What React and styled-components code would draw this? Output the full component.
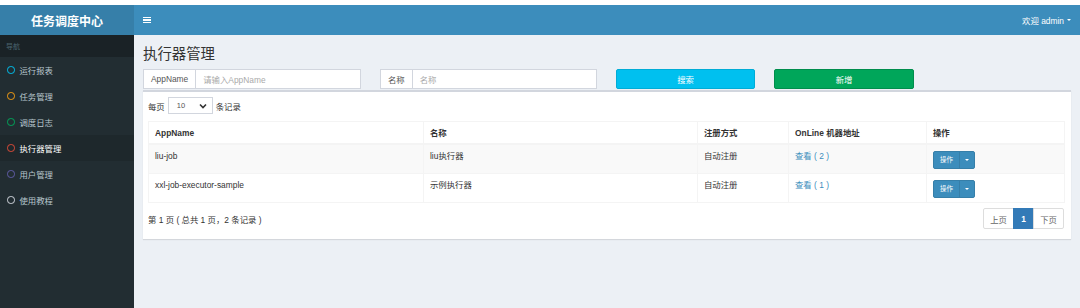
import React from 'react';
import styled, { createGlobalStyle } from 'styled-components';

const GlobalStyle = createGlobalStyle`
  html, body {
    margin: 0;
    padding: 0;
    background: #fff;
  }
  body {
    font-family: "Liberation Sans", "Noto Sans CJK SC", sans-serif;
    font-size: 8.4px;
    color: #333;
  }
  * {
    box-sizing: border-box;
  }
`;

const Page = styled.div`
  width: 1080px;
  height: 308px;
  padding-top: 5px;
  display: flex;
  flex-direction: column;
  background: #fff;
  overflow: hidden;
`;

const Header = styled.header`
  display: flex;
  height: 30px;
  flex-shrink: 0;
`;

const Logo = styled.div`
  width: 134px;
  background: #367fa9;
  color: #fff;
  font-size: 12px;
  font-weight: bold;
  display: flex;
  align-items: center;
  justify-content: center;
`;

const Navbar = styled.div`
  flex: 1;
  background: #3c8dbc;
  display: flex;
  align-items: center;
  justify-content: space-between;
  padding: 0 9px;
  color: #fff;
`;

const Toggle = styled.div`
  width: 8px;
  display: flex;
  flex-direction: column;
  gap: 1px;

  span {
    height: 1.5px;
    background: #fff;
  }
`;

const UserMenu = styled.div`
  display: flex;
  align-items: center;
  gap: 3px;
  font-size: 8.4px;
`;

const Caret = styled.span`
  width: 0;
  height: 0;
  border-left: 2.5px solid transparent;
  border-right: 2.5px solid transparent;
  border-top: 2.5px solid ${p => p.color || '#fff'};
  display: inline-block;
`;

const Main = styled.div`
  flex: 1;
  display: flex;
  min-height: 0;
`;

const Sidebar = styled.aside`
  width: 134px;
  background: #222d32;
  flex-shrink: 0;
`;

const NavHeader = styled.div`
  height: 22px;
  background: #1a2226;
  color: #4b646f;
  font-size: 7px;
  display: flex;
  align-items: center;
  padding-left: 6px;
`;

const NavItem = styled.div`
  height: 26px;
  display: flex;
  align-items: center;
  padding-left: 7px;
  gap: 5px;
  color: ${p => (p.active ? '#fff' : '#b8c7ce')};
  background: ${p => (p.active ? '#1e282c' : 'transparent')};
  font-size: 8.4px;
`;

const Ring = styled.span`
  width: 7.5px;
  height: 7.5px;
  border-radius: 50%;
  border: 1.6px solid ${p => p.color};
`;

const Content = styled.main`
  flex: 1;
  background: #ecf0f5;
  padding: 0 9px 0 9px;
`;

const Title = styled.h1`
  margin: 0;
  font-size: 14.4px;
  font-weight: normal;
  color: #333;
  height: 34px;
  display: flex;
  align-items: center;
`;

const FilterRow = styled.div`
  display: grid;
  grid-template-columns: 218px 217px 139px 140px;
  column-gap: 19px;
  height: 20px;
`;

const InputGroup = styled.div`
  display: flex;
  background: #fff;
  border: 1px solid #d2d6de;
  height: 20px;
`;

const Addon = styled.span`
  padding: 0 7px;
  display: flex;
  align-items: center;
  border-right: 1px solid #d2d6de;
  color: #555;
`;

const Field = styled.span`
  flex: 1;
  padding-left: 7px;
  display: flex;
  align-items: center;
  color: #aaa;
`;

const Button = styled.div`
  height: 20px;
  border-radius: 2px;
  border: 1px solid ${p => p.border};
  background: ${p => p.bg};
  color: #fff;
  display: flex;
  align-items: center;
  justify-content: center;
`;

const Box = styled.section`
  background: #fff;
  border-top: 2px solid #d2d6de;
  box-shadow: 0 1px 1px rgba(0, 0, 0, 0.1);
  padding: 5px 6px 10px 5px;
  margin-top: 1px;
`;

const PerPage = styled.div`
  display: flex;
  align-items: center;
  gap: 3px;
  height: 17px;
  margin-bottom: 7px;
`;

const Select = styled.div`
  width: 45px;
  height: 17px;
  border: 1px solid #d2d6de;
  display: flex;
  align-items: center;
  justify-content: space-between;
  padding: 0 5px 0 8px;
  font-size: 7.5px;
  color: #555;
`;

const Table = styled.table`
  width: 916px;
  table-layout: fixed;
  border-collapse: collapse;
  border: 1px solid #f4f4f4;
`;

const Th = styled.th`
  text-align: left;
  font-weight: bold;
  padding: 5px 6px 4px;
  line-height: 12px;
  border: 1px solid #f4f4f4;
  border-bottom-width: 2px;
`;

const Tr = styled.tr`
  background: ${p => (p.striped ? '#f9f9f9' : '#fff')};
`;

const Td = styled.td`
  padding: 5px 6px 4px;
  line-height: 12px;
  vertical-align: top;
  border: 1px solid #f4f4f4;
  height: 28px;
`;

const Link = styled.span`
  color: #3c8dbc;
`;

const SplitButton = styled.div`
  display: inline-flex;
  height: 18px;
  margin-top: 1px;
  border-radius: 2px;
  background: #3c8dbc;
  border: 1px solid #367fa9;
  color: #fff;
  font-size: 6.5px;
  overflow: hidden;
  vertical-align: top;
`;

const SplitMain = styled.span`
  width: 26px;
  display: flex;
  align-items: center;
  justify-content: center;
  border-right: 1px solid #367fa9;
`;

const SplitToggle = styled.span`
  width: 14px;
  display: flex;
  align-items: center;
  justify-content: center;
`;

const Footer = styled.div`
  display: flex;
  justify-content: space-between;
  align-items: center;
  margin-top: 5px;
  width: 916px;
`;

const Pager = styled.div`
  display: flex;
  height: 21px;
`;

const PageLink = styled.span`
  padding: 0 6px;
  min-width: ${p => (p.narrow ? '21px' : '31px')};
  display: flex;
  align-items: center;
  justify-content: center;
  border: 1px solid ${p => (p.active ? '#337ab7' : '#ddd')};
  margin-left: -1px;
  background: ${p => (p.active ? '#337ab7' : '#fff')};
  color: ${p => (p.active ? '#fff' : '#666')};
  font-weight: ${p => (p.active ? 'bold' : 'normal')};
  border-radius: ${p => p.radius || '0'};
`;

const menu = [
  { label: '运行报表', color: '#00c0ef' },
  { label: '任务管理', color: '#f39c12' },
  { label: '调度日志', color: '#00a65a' },
  { label: '执行器管理', color: '#dd4b39', active: true },
  { label: '用户管理', color: '#605ca8' },
  { label: '使用教程', color: '#d2d6de' },
];

const rows = [
  { app: 'liu-job', name: 'liu执行器', type: '自动注册', count: 2 },
  { app: 'xxl-job-executor-sample', name: '示例执行器', type: '自动注册', count: 1 },
];

export default function App() {
  return (
    <>
      <GlobalStyle />
      <Page>
        <Header>
          <Logo>任务调度中心</Logo>
          <Navbar>
            <Toggle>
              <span />
              <span />
              <span />
            </Toggle>
            <UserMenu>
              欢迎 admin <Caret />
            </UserMenu>
          </Navbar>
        </Header>
        <Main>
          <Sidebar>
            <NavHeader>导航</NavHeader>
            {menu.map(m => (
              <NavItem key={m.label} active={m.active}>
                <Ring color={m.color} />
                {m.label}
              </NavItem>
            ))}
          </Sidebar>
          <Content>
            <Title>执行器管理</Title>
            <FilterRow>
              <InputGroup>
                <Addon>AppName</Addon>
                <Field>请输入AppName</Field>
              </InputGroup>
              <InputGroup>
                <Addon>名称</Addon>
                <Field>名称</Field>
              </InputGroup>
              <Button bg="#00c0ef" border="#00acd6">搜索</Button>
              <Button bg="#00a65a" border="#008d4c">新增</Button>
            </FilterRow>
            <Box>
              <PerPage>
                每页
                <Select>
                  10
                  <svg width="8" height="6" viewBox="0 0 8 6">
                    <path d="M1 1.5 L4 4.5 L7 1.5" stroke="#333" strokeWidth="1.6" fill="none" />
                  </svg>
                </Select>
                条记录
              </PerPage>
              <Table>
                <colgroup>
                  <col style={{ width: 275 }} />
                  <col style={{ width: 274 }} />
                  <col style={{ width: 91 }} />
                  <col style={{ width: 138 }} />
                  <col style={{ width: 138 }} />
                </colgroup>
                <thead>
                  <tr>
                    <Th>AppName</Th>
                    <Th>名称</Th>
                    <Th>注册方式</Th>
                    <Th>OnLine 机器地址</Th>
                    <Th>操作</Th>
                  </tr>
                </thead>
                <tbody>
                  {rows.map((r, i) => (
                    <Tr key={r.app} striped={i % 2 === 0}>
                      <Td>{r.app}</Td>
                      <Td>{r.name}</Td>
                      <Td>{r.type}</Td>
                      <Td>
                        <Link>查看 ( {r.count} )</Link>
                      </Td>
                      <Td>
                        <SplitButton>
                          <SplitMain>操作</SplitMain>
                          <SplitToggle>
                            <Caret />
                          </SplitToggle>
                        </SplitButton>
                      </Td>
                    </Tr>
                  ))}
                </tbody>
              </Table>
              <Footer>
                <span>第 1 页 ( 总共 1 页，2 条记录 )</span>
                <Pager>
                  <PageLink radius="2px 0 0 2px">上页</PageLink>
                  <PageLink active narrow>1</PageLink>
                  <PageLink radius="0 2px 2px 0">下页</PageLink>
                </Pager>
              </Footer>
            </Box>
          </Content>
        </Main>
      </Page>
    </>
  );
}
